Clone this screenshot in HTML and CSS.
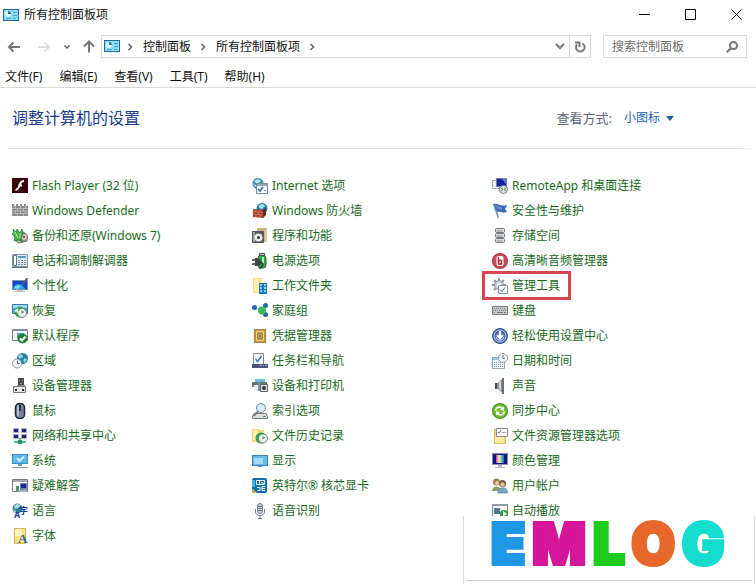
FILE: index.html
```html
<!DOCTYPE html>
<html lang="zh-CN">
<head>
    <meta charset="UTF-8">
    <meta name="viewport" content="width=device-width, initial-scale=1.0">
    <title>所有控制面板项</title>
    <link rel="stylesheet" href="styles.css">
</head>
<body>
    <header class="titlebar">
        <svg class="icon" viewBox="0 0 16 16"><path fill="#1b6f9f" d="M0 2h16v12H0z"/><path fill="#8fdcf8" d="M1 3h14v10H1z"/><circle cx="5" cy="7" r="3" fill="#e8faff"/><path fill="#2775aa" d="M5 7V4a3 3 0 0 1 3 3z"/><path stroke="#4c9cc4" d="M10 5.500h4M10 8.500h4M3 11.500h5M10 11.500h3"/></svg>
        <span class="title">所有控制面板项</span>
        <div class="window-buttons">
            <button type="button" aria-label="最小化"><svg width="11" height="11" viewBox="0 0 11 11"><path d="M0 5.500h11"/></svg></button>
            <button type="button" aria-label="最大化"><svg width="11" height="11" viewBox="0 0 11 11"><path d="M.5.5h10v10H.5z"/></svg></button>
            <button type="button" aria-label="关闭"><svg width="11" height="11" viewBox="0 0 11 11"><path d="M.5.5l10 10M10.500.5l-10 10"/></svg></button>
        </div>
    </header>

    <nav class="navbar">
        <div class="history">
            <button type="button" class="back" aria-label="后退"><svg width="14" height="12" viewBox="0 0 14 12"><path d="M13 6H2M6.500 1.500L2 6l4.500 4.500"/></svg></button>
            <button type="button" class="forward" aria-label="前进"><svg width="14" height="12" viewBox="0 0 14 12"><path d="M1 6h11M7.500 1.500L12 6l-4.500 4.500"/></svg></button>
            <button type="button" class="recent" aria-label="最近"><svg width="8" height="6" viewBox="0 0 8 6"><path d="M1.500 1.500L4 4l2.500-2.500"/></svg></button>
            <button type="button" class="up" aria-label="向上"><svg width="12" height="13" viewBox="0 0 12 13"><path d="M6 12.500V2M1 6.500l5-5 5 5"/></svg></button>
        </div>
        <div class="address">
            <svg class="icon" viewBox="0 0 16 16"><path fill="#1b6f9f" d="M0 1h16v12H0z"/><path fill="#8fdcf8" d="M1 2h14v10H1z"/><circle cx="5" cy="6" r="3" fill="#e8faff"/><path fill="#2775aa" d="M5 6V3a3 3 0 0 1 3 3z"/><path stroke="#4c9cc4" d="M10 4.500h4M10 7.500h4M3 10.500h5M10 10.500h3"/></svg>
            <svg class="sep" width="6" height="8" viewBox="0 0 6 8"><path d="M1.500 1L4.500 4l-3 3"/></svg>
            <a href="#">控制面板</a>
            <svg class="sep" width="6" height="8" viewBox="0 0 6 8"><path d="M1.500 1L4.500 4l-3 3"/></svg>
            <a href="#">所有控制面板项</a>
            <svg class="sep" width="6" height="8" viewBox="0 0 6 8"><path d="M1.500 1L4.500 4l-3 3"/></svg>
            <button type="button" class="expand" aria-label="展开"><svg width="10" height="7" viewBox="0 0 10 7"><path d="M1 1l4 4 4-4"/></svg></button>
            <button type="button" class="refresh" aria-label="刷新"><svg width="12" height="12" viewBox="0 0 12 12"><path d="M8.500 2.500A4.300 4.300 0 1 1 3 3.500M1 1.500h4.500V6"/></svg></button>
        </div>
        <div class="search">
            <input type="text" placeholder="搜索控制面板" aria-label="搜索控制面板">
            <svg width="12" height="12" viewBox="0 0 12 12"><circle cx="7.500" cy="4.500" r="3.500"/><path d="M5 7L.8 11.200"/></svg>
        </div>
    </nav>

    <div class="menubar">
        <button type="button">文件(F)</button>
        <button type="button">编辑(E)</button>
        <button type="button">查看(V)</button>
        <button type="button">工具(T)</button>
        <button type="button">帮助(H)</button>
    </div>

    <main>
        <div class="heading">
            <h1>调整计算机的设置</h1>
            <div class="view-by">
                <label for="view">查看方式:</label>
                <select id="view">
                    <option>类别</option>
                    <option>大图标</option>
                    <option selected>小图标</option>
                </select>
                <svg width="8" height="5" viewBox="0 0 8 5"><path fill="#1763b0" d="M0 0h8L4 5z"/></svg>
            </div>
        </div>

        <div class="items">
            <ul>
                <li><a href="#"><svg class="icon" viewBox="0 0 16 16"><path fill="#3d0509" d="M0 0h16v15H0z"/><path fill="none" stroke="#fff" stroke-width="2" d="M12 3C8 3 8 6 7 8.500S5 12 3.500 12M6.500 7.500H10"/></svg>Flash Player (32 位)</a></li>
                <li><a href="#"><svg class="icon" viewBox="0 0 16 16"><path fill="#8b8b8b" d="M0 1h2v2h2V1h2v2h2V1h2v2h2V1h2v2h2v10H0z"/><path stroke="#d4d4d4" stroke-width=".6" d="M0 5.500h16M0 8h16M0 10.500h16M3.500 3v2.500M8.500 3v2.500M13.500 3v2.500M5.500 5.500V8M11.500 5.500V8M3.500 8v2.500M8.500 8v2.500M13.500 8v2.500M5.500 10.500V13M11.500 10.500V13"/></svg>Windows Defender</a></li>
                <li><a href="#"><svg class="icon" viewBox="0 0 16 16"><path fill="#c9c7bd" stroke="#706e65" d="M4 9l8-5 3 4v5l-8 2-3-2z"/><circle cx="12" cy="9" r="3.500" fill="#d9c9d2" stroke="#776"/><circle cx="12" cy="9" r="1" fill="#823"/><path fill="#47b345" stroke="#18752b" stroke-width=".7" d="M1 1l3 3 1-3 3 4 2-4 1 5-2 5 2 3-5-2-4 1 1-4-3-3 2-1z"/><path stroke="#b9ec8c" d="M3 4l3 6M8 5v5"/></svg>备份和还原(Windows 7)</a></li>
                <li><a href="#"><svg class="icon" viewBox="0 0 16 16"><path fill="#dcecf5" stroke="#8598a8" d="M.5 1.500h15v12H.5z"/><path fill="#fff" stroke="#607386" d="M1.500 2.500h3v10h-3z"/><path fill="#5c98c0" d="M6 3h8v2H6z"/><path stroke="#6c8ca7" stroke-dasharray="2 1" d="M6 7.500h8M6 9.500h8M6 11.500h8"/><path fill="#596a7a" d="M0 14h16v1H0z"/></svg>电话和调制解调器</a></li>
                <li><a href="#"><svg class="icon" viewBox="0 0 16 16"><path fill="#8092a5" d="M0 2h16v10H0z"/><path fill="#1743d4" d="M1 3h14v8H1z"/><path fill="#27a4ed" d="M1 11c1-5 5-6 9-4l3 4z"/><path fill="#7be4ff" d="M2 10c2-3 5-3 7-2l-3 3z"/><path stroke="#52606c" stroke-width="2" d="M15.500 0L10 7"/><path fill="#b4c1ca" d="M5 12h6v1h2v1H3v-1h2z"/></svg>个性化</a></li>
                <li><a href="#"><svg class="icon" viewBox="0 0 16 16"><path fill="#4b9fda" stroke="#337bac" d="M.5 1.500h15v9H.5z"/><path fill="#9dd5f2" d="M1 2h14v3H1z"/><circle cx="8" cy="9" r="5.500" fill="#30a24d"/><circle cx="10" cy="10" r="4.500" fill="#eff6f0" stroke="#65836c"/><path fill="none" stroke="#5b7361" d="M10 7.500V10l2-1.500"/><path fill="#d9fbd7" d="M2 8l4-3v5z"/></svg>恢复</a></li>
                <li><a href="#"><svg class="icon" viewBox="0 0 16 16"><path fill="#f6f9fc" stroke="#78838e" d="M.5 1.500h15v11H.5z"/><path fill="#818d99" d="M1 1h14v2H1z"/><path fill="#58a6d9" d="M5 5h7v5H5z"/><circle cx="10.500" cy="10.500" r="5" fill="#16842c"/><path fill="none" stroke="#fff" stroke-width="2" d="M8 10.500l2 2 3.500-4"/></svg>默认程序</a></li>
                <li><a href="#"><svg class="icon" viewBox="0 0 16 16"><circle cx="10.500" cy="5.500" r="5.500" fill="#24779f"/><path fill="#85d8e6" d="M7 2c2-2 5 0 4 2L8 6 6 4zM12 5l3 1-2 4-2-2z"/><circle cx="5" cy="10.500" r="4.500" fill="#edf3f6" stroke="#8c9ba6"/><path fill="none" stroke="#526875" d="M5.500 7.500v3H8"/></svg>区域</a></li>
                <li><a href="#"><svg class="icon" viewBox="0 0 16 16"><path fill="#484848" d="M6 0h6v8H6z"/><path fill="#9b9b9b" d="M7 2h1v1H7zM10 2h1v1h-1zM8 5h2v1H8z"/><path fill="#e5e5e5" stroke="#777" d="M1.500 8.500h12v6h-12z"/><path fill="#333" d="M3 11h2v2H3zM10 11h2v2h-2z"/><path fill="#888" d="M5 7h8v1H5z"/></svg>设备管理器</a></li>
                <li><a href="#"><svg class="icon" viewBox="0 0 16 16"><rect x="3.500" y=".5" width="9" height="15" rx="4" fill="#71849a" stroke="#20262d" stroke-width="1.500"/><path fill="#b2c1cf" d="M5 3l2-1v12l-2-2z"/><path stroke="#1e3043" stroke-width="2" d="M8 2v6"/></svg>鼠标</a></li>
                <li><a href="#"><svg class="icon" viewBox="0 0 16 16"><path fill="#a9b4cc" d="M1 0h6v5H1zM9 0h6v5H9zM1 6h6v5H1zM9 6h6v5H9z"/><path fill="#23237f" d="M2 1h4v3H2zM10 1h4v3h-4zM2 7h4v3H2zM10 7h4v3h-4z"/><path stroke="#4fb989" stroke-width="2" d="M2 14h12M8 10v5"/><path fill="#298f69" d="M6 12h4v4H6z"/></svg>网络和共享中心</a></li>
                <li><a href="#"><svg class="icon" viewBox="0 0 16 16"><path fill="#438fc3" d="M0 1h16v10H0z"/><path fill="#57baf0" d="M1 2h14v8H1z"/><path fill="none" stroke="#fff" stroke-width="1.500" d="M5 5l2.500 3L12 3.500"/><path fill="#7896a7" d="M6 11h4v2H6zM0 14h16v1H0z"/></svg>系统</a></li>
                <li><a href="#"><svg class="icon" viewBox="0 0 16 16"><path fill="#fff" stroke="#777c8c" d="M.5 1.500h15v12H.5z"/><path fill="#a2a6b3" d="M1 2h14v2H1z"/><path fill="#7e8498" d="M8 5h7v7H8z"/><path fill="#1624a1" d="M9 6h5v4H9z"/><path fill="#a5b3cf" d="M6 12h9v2H6z"/><path fill="#4a946b" d="M4 8h3v5H4z"/></svg>疑难解答</a></li>
                <li><a href="#"><svg class="icon" viewBox="0 0 16 16"><circle cx="5.500" cy="5.500" r="5" fill="#33829c"/><path fill="#a5dfde" d="M2 3l3-2 4 1-3 3-3 1zM1 6l3 2-1 2z"/><text class="glyph" x="2" y="15" font-size="9">A</text><text class="glyph" x="7" y="11" font-size="9">字</text></svg>语言</a></li>
                <li><a href="#"><svg class="icon" viewBox="0 0 16 16"><path fill="#f8dc82" stroke="#d9b654" d="M2.500.5h11v15h-11z"/><path fill="#fff1b9" d="M3 1h7v7H3z"/><text class="glyph serif" x="6" y="15" font-size="13">A</text></svg>字体</a></li>
            </ul>
            <ul>
                <li><a href="#"><svg class="icon" viewBox="0 0 16 16"><circle cx="6" cy="5.500" r="5.500" fill="#3a91ba"/><path fill="#bee4e8" d="M2 3l4-2 3 2-4 3zM1 6l3 1v2z"/><path fill="#f6fafc" stroke="#75899c" d="M4.500 5.500h11v10h-11z"/><path fill="#92a3b5" d="M5 6h10v2H5z"/><path fill="none" stroke="#3467a6" stroke-width="1.500" d="M6 11l2 2 3-4"/><path stroke="#7a8b9c" d="M12 12.500h2"/></svg>Internet 选项</a></li>
                <li><a href="#"><svg class="icon" viewBox="0 0 16 16"><circle cx="10" cy="5.500" r="5.500" fill="#287fab"/><path fill="#a5dce5" d="M7 2l4-1 2 2-3 3-3-1z"/><path fill="#a83b28" d="M1 6l10 1v8L1 14z"/><path fill="#6c2218" d="M11 7l3-2v7l-3 3z"/><path stroke="#e09a75" stroke-width=".6" d="M1 8.500l10 1M1 11l10 1M4 6.500v2M8 7v2M6 9v2.500M4 11.500V14M8 12v3"/></svg>Windows 防火墙</a></li>
                <li><a href="#"><svg class="icon" viewBox="0 0 16 16"><path fill="#c9b182" d="M5 0h10v14H5z"/><path fill="#54585c" d="M0 3h12v12H0z"/><path fill="#a2a6a9" d="M1 4h2v10H1z"/><circle cx="6.500" cy="9.500" r="4" fill="#eceff0"/><circle cx="6.500" cy="9.500" r="1.500" fill="#35393d"/><path fill="#dcc99f" d="M13 1h2v13h-2z"/></svg>程序和功能</a></li>
                <li><a href="#"><svg class="icon" viewBox="0 0 16 16"><rect x="6" y="2" width="8" height="13" rx="3" fill="#33a74c" stroke="#335e3e"/><path fill="#b8efb8" d="M10 4h2v6h-2z"/><path fill="#bdc6be" stroke="#405447" d="M7.500.5h5v2h-5z"/><path fill="none" stroke="#263d2e" stroke-width="1.500" d="M0 7h4M0 11h4M8 9c4 0 3 6-1 6"/><path fill="#3f4a42" d="M3 5h3c2 1 3 2 3 4s-1 4-3 4H3z"/></svg>电源选项</a></li>
                <li><a href="#"><svg class="icon" viewBox="0 0 16 16"><path fill="#f7db7f" d="M1 0h9v15H1z"/><path fill="#ffefb0" d="M2 1h5v13H2z"/><path fill="#1b78bc" d="M7 5h8v11H7z"/><path fill="#8cd3fa" d="M8 6h2v2H8zM12 6h2v2h-2zM8 9h2v2H8zM12 9h2v2h-2zM8 12h2v2H8zM12 12h2v2h-2z"/></svg>工作文件夹</a></li>
                <li><a href="#"><svg class="icon" viewBox="0 0 16 16"><path stroke="#6bc4ce" d="M3 5l7 3M10 8l4-5M10 8l3 4"/><circle cx="2.500" cy="4.500" r="2.500" fill="#2465ad"/><circle cx="13.500" cy="2.500" r="2.500" fill="#2465ad"/><circle cx="13.500" cy="11.500" r="2.500" fill="#2465ad"/><circle cx="10" cy="7.500" r="4" fill="#35b85c"/></svg>家庭组</a></li>
                <li><a href="#"><svg class="icon" viewBox="0 0 16 16"><path fill="#c69b43" stroke="#a8843f" d="M2.500 1.500h11v13h-11z"/><path fill="none" stroke="#edcf88" d="M4.500 3.500h7v9h-7z"/><circle cx="8" cy="8" r="2.500" fill="#e8d29c" stroke="#7f602b"/><circle cx="8" cy="8" r="1" fill="#66502d"/></svg>凭据管理器</a></li>
                <li><a href="#"><svg class="icon" viewBox="0 0 16 16"><path fill="#f8fcff" stroke="#788b99" d="M1.500.5h10v11h-10z"/><path fill="none" stroke="#3579b2" stroke-width="1.500" d="M3.500 6l2 2.500L9.500 3"/><path fill="#495879" d="M0 11h16v4H0z"/><path fill="#9fadce" d="M8 12h2v1H8zM11 12h1v1h-1zM13 12h2v1h-2z"/></svg>任务栏和导航</a></li>
                <li><a href="#"><svg class="icon" viewBox="0 0 16 16"><path fill="#6bc1d7" d="M3 1h10v5H3z"/><path fill="#6c7379" d="M0 4h15v5H0z"/><path fill="#e9edef" d="M2 7h4v6H2z"/><path fill="#d7dcdf" stroke="#596268" d="M8.500 6.500h7v7h-7z"/><circle cx="12" cy="10" r="2" fill="#303a41"/><path fill="#889198" d="M6 5h2v8H6z"/></svg>设备和打印机</a></li>
                <li><a href="#"><svg class="icon" viewBox="0 0 16 16"><path fill="#dbdedf" stroke="#73787c" d="M2 10.500h12l1.500 3v2H.5v-2z"/><path stroke="#6b8d52" d="M11 13.500h3"/><circle cx="9" cy="5" r="4.500" fill="#d7ecf9" stroke="#7a8d9c"/><path stroke="#777f85" stroke-width="2" d="M6 8.500L1.500 13"/></svg>索引选项</a></li>
                <li><a href="#"><svg class="icon" viewBox="0 0 16 16"><path fill="#f4d76e" d="M0 1h7l1 1h4v12H0z"/><path fill="#ffedaa" d="M1 2h5v10H1z"/><circle cx="9" cy="10" r="5.500" fill="#35a451"/><circle cx="11" cy="10.500" r="4.500" fill="#eef6ef" stroke="#64806a"/><path fill="none" stroke="#59775f" d="M11 8v3l2-2"/></svg>文件历史记录</a></li>
                <li><a href="#"><svg class="icon" viewBox="0 0 16 16"><path fill="#3c83bd" d="M0 2h16v11H0z"/><path fill="#69b8ea" d="M1 3h14v9H1z"/><path fill="#a6dbf7" d="M2 5h9v6H2z"/><path fill="#57a1d6" d="M6 13h4v1H6z"/></svg>显示</a></li>
                <li><a href="#"><svg class="icon" viewBox="0 0 16 16"><rect width="15" height="15" rx="2" fill="#146fae"/><path fill="#42b0e3" d="M0 2h3v7H0z"/><path fill="#e4ae42" d="M0 10l5 5H2l-2-2z"/><path fill="none" stroke="#fff" d="M4.500 2.500h8v4h-8zM7.500 2.500v4M9 4l3 2M5 9.500h3v3H5.500M13 8.500h-3v4h3M10 10.500h3"/></svg>英特尔® 核芯显卡</a></li>
                <li><a href="#"><svg class="icon" viewBox="0 0 16 16"><rect x="5.500" y=".5" width="5" height="10" rx="2.500" fill="#c9cfdf" stroke="#737b96"/><path stroke="#737b96" d="M5 3.500h6M5 5.500h6M5 7.500h6"/><path fill="none" stroke="#737b96" d="M3.500 6v3c0 2 2 3.500 4.500 3.500s4.500-1.500 4.500-3.500V6M8 12v3M6 15.500h4"/></svg>语音识别</a></li>
            </ul>
            <ul>
                <li><a href="#"><svg class="icon" viewBox="0 0 16 16"><path fill="#eef3f8" stroke="#7c8592" stroke-dasharray="2 1" d="M.5 2.500h7v8h-7z"/><path fill="#7680a3" d="M4 0h11v9H4z"/><path fill="#1421a0" d="M5 1h9v7H5z"/><path fill="#6678e0" d="M10 1h4v5z"/><circle cx="11.500" cy="11.500" r="4" fill="#e4e7e8" stroke="#777e82"/><path fill="none" stroke="#3b7d4c" d="M9 10l2 1.500L9 13M14 10l-2 1.500 2 1.500"/></svg>RemoteApp 和桌面连接</a></li>
                <li><a href="#"><svg class="icon" viewBox="0 0 16 16"><path stroke="#708daa" stroke-width="1.500" d="M1.500 1l5 14"/><path fill="#3467bc" d="M2 1c4-1 5 3 13 1l-2 4 2 3c-6 2-7-2-10 0z"/><path fill="#5f8bd4" d="M3 2c3 0 4 2 7 2v3C7 7 6 5 5 7z"/></svg>安全性与维护</a></li>
                <li><a href="#"><svg class="icon" viewBox="0 0 16 16"><g fill="#d6d8da" stroke="#777b80"><rect x="3.500" y=".5" width="9" height="4" rx="1"/><rect x="3.500" y="5.500" width="9" height="4" rx="1"/><rect x="3.500" y="10.500" width="9" height="4" rx="1"/></g><path stroke="#8a8e92" d="M5 3h5M5 8h5M5 13h5"/></svg>存储空间</a></li>
                <li><a href="#"><svg class="icon" viewBox="0 0 16 16"><circle cx="8" cy="8" r="8" fill="#b93845"/><circle cx="8" cy="8" r="6.500" fill="#c9505c"/><rect x="4.500" y="3" width="7" height="10" rx="2" fill="#fff"/><path fill="none" stroke="#b52332" stroke-width="1.500" d="M6.500 4v7H9.500V7.500h-3"/></svg>高清晰音频管理器</a></li>
                <li class="marked"><a href="#"><svg class="icon" viewBox="0 0 16 16"><path stroke="#8f989f" stroke-width="2" d="M7 0v14M0 7h14M2 2l10 10M12 2L2 12"/><circle cx="7" cy="7" r="4.500" fill="#c7ced3" stroke="#8d979f"/><circle cx="7" cy="7" r="2" fill="#fff"/><path fill="#fafcff" stroke="#7c91a3" d="M6.500 7.500h9v8h-9z"/><path fill="none" stroke="#3f73a2" d="M8 11.500l2 2 3-4"/></svg>管理工具</a></li>
                <li><a href="#"><svg class="icon" viewBox="0 0 16 16"><path fill="#c8cbce" stroke="#7b8084" d="M.5 3.500h15v8H.5z"/><path stroke="#777c80" stroke-dasharray="1 1" d="M2 5.500h12M1 7.500h14M2 9.500h2"/><path stroke="#777c80" d="M5 9.500h6M12 9.500h2"/></svg>键盘</a></li>
                <li><a href="#"><svg class="icon" viewBox="0 0 16 16"><circle cx="8" cy="8" r="7.500" fill="#4a6ba8" stroke="#304f84"/><circle cx="8" cy="8" r="6" fill="none" stroke="#b9cdf0"/><path fill="none" stroke="#fff" stroke-width="2" d="M8 3v6M5 7l3 3 3-3"/><path fill="none" stroke="#fff" d="M4 9c1 4 7 4 8 0"/></svg>轻松使用设置中心</a></li>
                <li><a href="#"><svg class="icon" viewBox="0 0 16 16"><path fill="#eff7fb" stroke="#8fa4b1" d="M.5 4.500h12v11H.5z"/><path fill="#9fc3d9" d="M1 5h11v2H1z"/><path stroke="#729ab5" stroke-dasharray="1 1" d="M2 9.500h9M2 11.500h9M2 13.500h9"/><circle cx="11" cy="5" r="4.500" fill="#f5f9fa" stroke="#8a9da8"/><path fill="none" stroke="#56798d" d="M11 2v3.500h2"/></svg>日期和时间</a></li>
                <li><a href="#"><svg class="icon" viewBox="0 0 16 16"><path fill="#8c8f92" d="M3 5h3l5-5v16l-5-5H3z"/><path fill="#4c5053" d="M3 5h2v6H3z"/><path fill="#d4d7d9" d="M7 5l2-2v10l-2-2z"/><path fill="#696d70" d="M10 0h2v16h-2z"/></svg>声音</a></li>
                <li><a href="#"><svg class="icon" viewBox="0 0 16 16"><circle cx="8" cy="8" r="8" fill="#4d9b26"/><circle cx="8" cy="8" r="6.500" fill="#79c334"/><path fill="none" stroke="#fff" stroke-width="1.500" d="M3.500 7.500C4 4 8 3 10.500 5.500M12.500 8.500C12 12 8 13 5.500 10.500"/><path fill="#fff" d="M12 3.500V8L8 6.500zM4 12.500V8l4 1.500z"/></svg>同步中心</a></li>
                <li><a href="#"><svg class="icon" viewBox="0 0 16 16"><path fill="#f5d979" stroke="#d9b95d" d="M2.500 1.500h11v14h-11z"/><path fill="#fffdf5" stroke="#818a92" d="M4.500.5h11v8h-11z"/><path fill="none" stroke="#467a9f" d="M6 4l1 1 2-3"/><path stroke="#98a2a8" d="M10 4.500h4"/><path fill="#ffe99a" d="M3 9h9v6H3z"/></svg>文件资源管理器选项</a></li>
                <li><a href="#"><svg class="icon" viewBox="0 0 16 16"><defs><linearGradient id="spectrum"><stop offset="0" stop-color="#e02fc0"/><stop offset=".4" stop-color="#f3f0a0"/><stop offset=".7" stop-color="#45d5a4"/><stop offset="1" stop-color="#2a62d8"/></linearGradient></defs><path fill="#8b8eb8" d="M0 0h16v12H0z"/><path fill="#141484" d="M1 1h14v10H1z"/><path fill="url(#spectrum)" d="M4 2h8v8H4z"/><path fill="#b5b7bf" d="M6 12h4v2h3v1H3v-1h3z"/></svg>颜色管理</a></li>
                <li><a href="#"><svg class="icon" viewBox="0 0 16 16"><circle cx="4.500" cy="4" r="3.500" fill="#9a8254"/><circle cx="5" cy="5" r="2" fill="#f0cb95"/><path fill="#82a768" d="M0 13c0-6 9-6 9 0z"/><circle cx="10.500" cy="5.500" r="3.500" fill="#785d42"/><circle cx="10.500" cy="6.500" r="2.200" fill="#eabd88"/><path fill="#7ba7cd" stroke="#567b9c" stroke-width=".7" d="M6 15c0-7 9.500-7 9.500 0z"/></svg>用户帐户</a></li>
                <li><a href="#"><svg class="icon" viewBox="0 0 16 16"><path fill="#fff" stroke="#7d878e" d="M.5 1.500h15v12H.5z"/><path fill="#919ba2" d="M1 1h14v2H1z"/><path fill="#4e7791" d="M2 5h6v6H2z"/><circle cx="12" cy="11" r="4" fill="#319643"/><path fill="#fff" d="M11 8l4 3-4 3z"/></svg>自动播放</a></li>
            </ul>
        </div>
    </main>

    <!-- 右下角标志 -->
    <div class="watermark">
        <div class="logo"><span class="e">E</span><span class="m">M</span><span class="l">L</span><span class="o">O</span><span class="g">G</span></div>
    </div>
</body>
</html>
```
FILE: styles.css
```css
* {
    box-sizing: border-box;
}
body {
    position: relative;
    margin: 0;
    min-height: 100vh;
    background-color: #fff;
    color: #111;
    font-family: "Noto Sans", "Noto Sans CJK SC", sans-serif;
    font-size: 12px;
    line-height: 20px;
}
button, input, select {
    margin: 0;
    padding: 0;
    border: none;
    background: none;
    color: inherit;
    font: inherit;
}
a {
    color: inherit;
    text-decoration: none;
}
svg {
    display: block;
    flex: none;
}
.icon {
    width: 16px;
    height: 16px;
}
.titlebar {
    display: flex;
    align-items: center;
    gap: 5px;
    height: 29px;
    padding-left: 3px;
}
.window-buttons {
    display: flex;
    gap: 6px;
    margin-left: auto;
}
.window-buttons button {
    display: flex;
    align-items: center;
    justify-content: center;
    width: 40px;
    height: 29px;
}
.window-buttons path {
    fill: none;
    stroke: #000;
}
.navbar {
    display: flex;
    align-items: center;
    padding: 6px 9px 0 7px;
}
.navbar svg:not(.icon) {
    fill: none;
    stroke: #777;
    stroke-width: 2;
}
.history {
    display: flex;
    align-items: center;
    gap: 12px;
    width: 94px;
}
.history .back {
    margin-right: 4px;
}
.navbar .forward svg:not(.icon) {
    stroke: #ddd;
}
.navbar .recent svg:not(.icon), .navbar svg.sep:not(.icon) {
    stroke-width: 1.5;
    stroke: #666;
}
.address {
    display: flex;
    flex: 1;
    align-items: center;
    height: 23px;
    padding-left: 2px;
    border: 1px solid #d9d9d9;
}
.address .sep {
    margin: 0 10px 0 9px;
}
.address .sep:nth-of-type(2) {
    margin-left: 7px;
}
.expand {
    margin-left: auto;
    padding: 0 4px;
}
.refresh {
    display: flex;
    align-items: center;
    height: 21px;
    padding: 0 4px;
    border-left: 1px solid #d9d9d9;
}
.search {
    display: flex;
    align-items: center;
    width: 144px;
    height: 23px;
    margin-left: 12px;
    padding: 0 8px;
    border: 1px solid #d9d9d9;
}
.search input {
    flex: 1;
    min-width: 0;
    outline: none;
}
.search input::placeholder {
    color: #6d6d6d;
}
.menubar {
    display: flex;
    gap: 17px;
    padding: 9px 5px 0;
    border-bottom: 1px solid #d9d9d9;
}
.heading {
    display: flex;
    align-items: center;
    justify-content: space-between;
    margin-left: 8px;
    padding: 20px 82px 21px 4px;
    background: linear-gradient(to right, #ddd 97%, #fff) bottom / 100% 1px no-repeat;
}
.heading h1 {
    margin: 0;
    color: #173a8c;
    font-size: 16px;
    font-weight: normal;
}
.view-by {
    display: flex;
    align-items: center;
}
.view-by label {
    margin-right: 12px;
    color: #5a6779;
    font-size: 13px;
}
.view-by select {
    appearance: none;
    margin-right: 5px;
    color: #1763b0;
}
.items {
    display: grid;
    grid-template-columns: repeat(auto-fill, 240px);
    padding: 24px 0 0 12px;
}
.items ul {
    margin: 0;
    padding: 0;
    list-style: none;
}
.items li {
    display: flex;
    height: 25px;
    align-items: center;
}
.items a {
    display: flex;
    align-items: center;
    gap: 4px;
    color: #166b1c;
    white-space: nowrap;
}
.marked a {
    height: 23px;
    outline: 3px solid #d84450;
    margin: 0 -7px;
    padding: 0 8px 0 7px;
}
.glyph {
    fill: #163e9b;
    font-weight: bold;
}
.glyph.serif {
    fill: #246b9d;
    font-family: "Liberation Serif", serif;
}
.watermark {
    position: absolute;
    right: 1px;
    bottom: 0;
    width: 292px;
    height: 68px;
    padding: 0 2px 3px;
    border: solid #d9d9d9;
    border-width: 0 1px;
    background-color: #fff;
}
.logo {
    display: flex;
    gap: 7px;
    height: 65px;
    padding-left: 25px;
    border-bottom: 1px solid #ccc;
    font-family: Inter, sans-serif;
    font-size: 56px;
    font-weight: 900;
    line-height: 56px;
    white-space: nowrap;
    -webkit-text-stroke: 4px;
}
.e {
    color: #1e98e4;
}
.m {
    color: #d7159a;
}
.l {
    color: #1dcb1d;
}
.o {
    color: #e8682a;
}
.g {
    color: #14dccf;
}
```
